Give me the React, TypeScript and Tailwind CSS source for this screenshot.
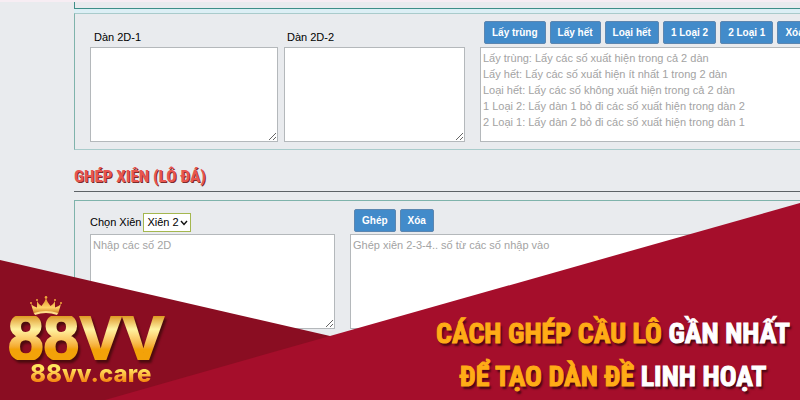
import React from 'react';

const HINTS = [
  'Lấy trùng: Lấy các số xuất hiện trong cả 2 dàn',
  'Lấy hết: Lấy các số xuất hiện ít nhất 1 trong 2 dàn',
  'Loại hết: Lấy các số không xuất hiện trong cả 2 dàn',
  '1 Loại 2: Lấy dàn 1 bỏ đi các số xuất hiện trong dàn 2',
  '2 Loại 1: Lấy dàn 2 bỏ đi các số xuất hiện trong dàn 1',
].join('\n');

const COMPARE_ACTIONS = ['Lấy trùng', 'Lấy hết', 'Loại hết', '1 Loại 2', '2 Loại 1', 'Xóa'];

const FIELD =
  'block h-[95px] w-full border border-[#b4b8bb] bg-white px-0.5 py-[2px] text-[11px] leading-4 text-black placeholder:text-[#a3a3a3] outline-none';

const ActionButton: React.FC<{ label: string }> = ({ label }) => (
  <button
    type="button"
    className="h-[23px] shrink-0 rounded-[2px] border border-[#5c86b0] bg-[#428bca] px-[7px] text-[10px] leading-4 font-bold whitespace-nowrap text-white"
  >
    {label}
  </button>
);

const Crown: React.FC = () => (
  <svg viewBox="0 0 34 20" className="ml-[21px] block h-5 w-[34px]" aria-hidden="true">
    <defs>
      <linearGradient id="crown" x1="0" y1="0" x2="0" y2="1">
        <stop offset="0" stopColor="#e08f22" />
        <stop offset="0.6" stopColor="#ffd468" />
        <stop offset="1" stopColor="#c9741a" />
      </linearGradient>
    </defs>
    <path
      d="M5 18 L2 8 Q5 11 8 11.5 L8 5 Q10 9 12.5 10 Q16 6 17 2 Q18 6 21.5 10 Q24 9 26 5 L26 11.5 Q29 11 32 8 L29 18 Q17 14 5 18Z"
      fill="url(#crown)"
    />
    <path d="M5 17 Q17 13 29 17 L28 19 Q17 15 6 19Z" fill="#ffdf8a" />
    <g fill="#f0a83a">
      <circle cx="2" cy="7" r="1" />
      <circle cx="8" cy="4" r="1" />
      <circle cx="17" cy="1.4" r="1.3" />
      <circle cx="26" cy="4" r="1" />
      <circle cx="32" cy="7" r="1" />
    </g>
  </svg>
);

const Banner: React.FC = () => (
  <div className="absolute inset-x-0 bottom-0 h-[200px]">
    <svg viewBox="0 0 800 200" preserveAspectRatio="none" className="absolute inset-0 h-full w-full" aria-hidden="true">
      <polygon points="0,60 330,136 330,200 0,200" fill="#8a0d22" />
      <polygon points="330,136 800,3 800,200 105,200" fill="#a50e2b" />
    </svg>
    <div className="relative flex h-full items-end justify-between">
      <div className="mb-3.5 ml-2">
        <Crown />
        <div className="mb-0.5 bg-linear-to-b from-[#dd9a1c] from-0% via-[#fff3a0] via-30% to-[#f3a209] to-75% bg-clip-text text-[64px] leading-[44px] font-bold text-transparent drop-shadow-[2px_3px_1px_#4c0a0e] [-webkit-text-stroke:2px_transparent]">
          88VV
        </div>
        <div className="ml-[22px] bg-linear-to-b from-[#ffe45c] from-30% to-[#f58a12] to-80% bg-clip-text font-['Inter','Liberation_Sans',sans-serif] text-[24px] leading-6 font-extrabold text-transparent">
          88vv.care
        </div>
      </div>
      <h1 className="mr-2.5 mb-0.5 text-center font-['Liberation_Sans_Narrow','Roboto_Condensed','Open_Sans_Condensed','Liberation_Sans',sans-serif] text-[28px] leading-[43px] font-bold whitespace-nowrap text-[#ffac16] [-webkit-text-stroke:1px] [text-shadow:2px_3px_2px_#4b0713]">
        CÁCH GHÉP CẦU LÔ <span className="text-white">GẦN NHẤT</span>
        <br />
        ĐỂ TẠO DÀN ĐỀ <span className="text-white">LINH HOẠT</span>
      </h1>
    </div>
  </div>
);

const App: React.FC = () => {
  return (
    <div className="relative min-h-screen overflow-hidden border-t-2 border-[#f7edf3] bg-[#e9ebee] font-['Liberation_Sans',Arial,sans-serif] text-[11px] leading-4 text-black">
      <div className="-mr-12 pl-[74px]">
        <div className="h-[7px] border-b border-l border-[#3f8f88]" />
        <div className="h-1 bg-[#dceff5]" />

        <section className="flex h-[137px] border border-[#a9cbcb] border-l-[#7fb3ab] pt-[7px] pl-[15px]">
          <div className="w-[188px] pt-2">
            <label htmlFor="dan1" className="mb-[2px] block pl-1 leading-4">Dàn 2D-1</label>
            <textarea id="dan1" className={FIELD} />
          </div>
          <div className="ml-1.5 w-[181px] pt-2">
            <label htmlFor="dan2" className="mb-[2px] block pl-[3px] leading-4">Dàn 2D-2</label>
            <textarea id="dan2" className={FIELD} />
          </div>
          <div className="ml-[15px] min-w-0 flex-1">
            <div className="mb-[3px] flex gap-1 pl-1">
              {COMPARE_ACTIONS.map((label) => (
                <ActionButton key={label} label={label} />
              ))}
            </div>
            <textarea aria-label="Kết quả" placeholder={HINTS} className={FIELD} />
          </div>
        </section>

        <h2 className="mt-3 mb-2 border-b border-[#5d6266] pb-px font-['Liberation_Sans_Narrow','Roboto_Condensed','Open_Sans_Condensed','Liberation_Sans',sans-serif] text-[17px] leading-7 font-bold text-[#e8554f] [text-shadow:1px_1px_0_#7d2c2c]">
          GHÉP XIÊN (LÔ ĐÁ)
        </h2>

        <section className="flex h-[150px] border border-[#7fb3ab] pt-2 pl-[15px]">
          <div className="w-[245px]">
            <div className="mt-[3px] mb-[2px] flex h-5 items-center gap-[2px]">
              <label htmlFor="xien">Chọn Xiên</label>
              <div className="relative">
                <select
                  id="xien"
                  defaultValue="2"
                  className="block h-[19px] w-12 appearance-none border border-[#a4b74f] bg-white pl-[3px] text-[11px] leading-4 outline-none"
                >
                  <option value="2">Xiên 2</option>
                  <option value="3">Xiên 3</option>
                  <option value="4">Xiên 4</option>
                </select>
                <svg viewBox="0 0 8 6" className="pointer-events-none absolute top-[7px] right-[3px] h-1.5 w-2" aria-hidden="true">
                  <path d="M1 1 L4 4.5 L7 1" fill="none" stroke="#111" strokeWidth="1.4" />
                </svg>
              </div>
            </div>
            <textarea aria-label="Các số 2D" placeholder="Nhập các số 2D" className={FIELD} />
          </div>
          <div className="ml-[15px] min-w-0 flex-1">
            <div className="mb-[2px] flex gap-1 pl-1">
              <ActionButton label="Ghép" />
              <ActionButton label="Xóa" />
            </div>
            <textarea
              aria-label="Kết quả ghép xiên"
              placeholder="Ghép xiên 2-3-4.. số từ các số nhập vào"
              className={FIELD}
            />
          </div>
        </section>
      </div>

      <Banner />
    </div>
  );
};

export default App;
